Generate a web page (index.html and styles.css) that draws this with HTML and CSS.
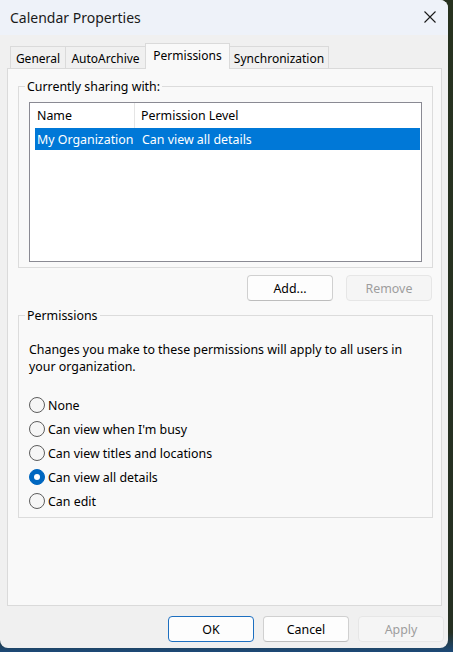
FILE: index.html
```html
<!DOCTYPE html>
<html lang="en">
<head>
<meta charset="utf-8">
<title>Calendar Properties</title>
<link rel="stylesheet" href="styles.css">
</head>
<body>
<div class="window">
  <div class="titlebar">
    <span class="title">Calendar Properties</span>
    <button class="close" aria-label="Close">
      <svg width="12" height="12" viewBox="0 0 12 12"><path d="M0.5 0.5 L11.5 11.5 M11.5 0.5 L0.5 11.5" stroke="#1a1a1a" stroke-width="1.1" fill="none"/></svg>
    </button>
  </div>
  <div class="tabs">
    <div class="tab tab-general">General</div>
    <div class="tab tab-auto">AutoArchive</div>
    <div class="tab tab-perm active">Permissions</div>
    <div class="tab tab-sync">Synchronization</div>
  </div>
  <div class="panel">
    <fieldset class="group sharing">
      <legend>Currently sharing with:</legend>
      <div class="listview">
        <div class="lv-header">
          <div class="col col-name">Name</div>
          <div class="col col-level">Permission Level</div>
        </div>
        <div class="lv-row selected">
          <div class="col col-name">My Organization</div>
          <div class="col col-level">Can view all details</div>
        </div>
      </div>
    </fieldset>
    <div class="btn-row">
      <button class="btn">Add...</button>
      <button class="btn" disabled>Remove</button>
    </div>
    <fieldset class="group perms">
      <legend>Permissions</legend>
      <p class="desc">Changes you make to these permissions will apply to all users in your organization.</p>
      <div class="radios">
        <label class="radio"><span class="dot"></span>None</label>
        <label class="radio"><span class="dot"></span>Can view when I'm busy</label>
        <label class="radio"><span class="dot"></span>Can view titles and locations</label>
        <label class="radio"><span class="dot checked"></span>Can view all details</label>
        <label class="radio"><span class="dot"></span>Can edit</label>
      </div>
    </fieldset>
  </div>
  <div class="footer">
    <button class="btn default">OK</button>
    <button class="btn">Cancel</button>
    <button class="btn" disabled>Apply</button>
  </div>
</div>
</body>
</html>
```

FILE: styles.css
```css
* { box-sizing: border-box; }
html, body {
  margin: 0;
  padding: 0;
  width: 453px;
  height: 652px;
  overflow: hidden;
}
body {
  background: linear-gradient(to bottom, #27321f 0%, #263022 97%, #1d4a78 100%);
  font-family: "Noto Sans", "Segoe UI", sans-serif;
  font-size: 12.4px;
  color: #000;
}
.window {
  width: 448px;
  height: 648px;
  background: #f0f0f0;
  border-radius: 0 8px 8px 8px;
  overflow: hidden;
  display: flex;
  flex-direction: column;
}
.titlebar {
  height: 35px;
  background: #eef2f9;
  display: flex;
  align-items: center;
  justify-content: space-between;
  padding: 0 11px 0 10px;
  flex: none;
}
.title {
  font-size: 14px;
  color: #1a1a1a;
}
.close {
  border: 0;
  background: transparent;
  padding: 0;
  width: 14px;
  height: 14px;
  display: flex;
  align-items: center;
  justify-content: center;
  margin-top: -1px;
}
.tabs {
  display: flex;
  align-items: flex-end;
  height: 24px;
  margin-top: 9px;
  padding-left: 10px;
  flex: none;
  position: relative;
  z-index: 1;
  font-size: 12px;
}
.tab {
  height: 22px;
  border: 1px solid #dadada;
  border-bottom: 0;
  background: #f0f0f0;
  display: flex;
  align-items: center;
  justify-content: center;
  margin-right: -1px;
  padding-top: 1px;
  color: #000;
  white-space: nowrap;
}
.tab-general { width: 56px; }
.tab-auto { width: 81px; }
.tab-perm { width: 85px; }
.tab-sync { width: 100px; }
.tab.active {
  height: 26px;
  margin-bottom: -1px;
  background: #f9f9f9;
  padding-top: 0;
  padding-bottom: 3px;
  position: relative;
  z-index: 2;
}
.panel {
  margin-left: 7px;
  width: 435px;
  height: 538px;
  background: #f9f9f9;
  border: 1px solid #dadada;
  flex: none;
  display: flex;
  flex-direction: column;
}
.group {
  margin: 0 8px 0 10px;
  border: 1px solid #dcdcdc;
  padding: 0 10px;
  min-width: 0;
}
.group legend {
  padding: 0 2px;
  margin-left: -4px;
  line-height: 17px;
  color: #000;
}
.sharing {
  margin-top: 9px;
  padding-top: 7px;
  padding-bottom: 5px;
}
.listview {
  height: 160px;
  border: 1px solid #8a8a93;
  background: #fff;
  padding: 0 1px 0 5px;
}
.lv-header, .lv-row {
  display: flex;
  align-items: center;
}
.lv-header {
  height: 25px;
}
.lv-row {
  height: 22px;
}
.col {
  white-space: nowrap;
}
.col-name {
  width: 100px;
  padding-left: 2px;
  height: 100%;
  display: flex;
  align-items: center;
}
.lv-header .col-name {
  border-right: 1px solid #e5e5e5;
}
.col-level {
  padding-left: 7px;
  flex: 1;
}
.lv-header .col-level {
  padding-left: 6px;
}
.lv-row.selected {
  background: #0078d7;
  color: #fff;
}
.btn-row {
  display: flex;
  justify-content: flex-end;
  gap: 13px;
  margin: 7px 9px 0 0;
}
.btn {
  width: 86px;
  height: 26px;
  border: 1px solid #d0d0d0;
  border-bottom-color: #bdbdbd;
  border-radius: 4px;
  background: #fdfdfd;
  font-family: inherit;
  font-size: 12.4px;
  color: #000;
  padding: 0;
}
.btn:disabled {
  background: #f5f5f5;
  border-color: #e6e6e6;
  color: #9d9d9d;
}
.btn.default {
  border: 1px solid #1d6fc0;
}
.perms {
  margin-top: 6px;
  padding-top: 17px;
  padding-bottom: 4px;
}
.desc {
  margin: 0;
  line-height: 17px;
  width: 390px;
}
.radios {
  margin-top: 18px;
  display: flex;
  flex-direction: column;
}
.radio {
  height: 24px;
  display: flex;
  align-items: center;
  gap: 3px;
}
.dot {
  width: 16px;
  height: 16px;
  border-radius: 50%;
  border: 1px solid #5d5d5d;
  background: #f6f6f6;
  flex: none;
  display: flex;
  align-items: center;
  justify-content: center;
}
.dot.checked {
  background: #0067c0;
  border-color: #0067c0;
}
.dot.checked::after {
  content: "";
  width: 6px;
  height: 6px;
  border-radius: 50%;
  background: #fff;
}
.footer {
  display: flex;
  justify-content: flex-end;
  gap: 9px;
  margin-top: 10px;
  padding-right: 4px;
}
```
